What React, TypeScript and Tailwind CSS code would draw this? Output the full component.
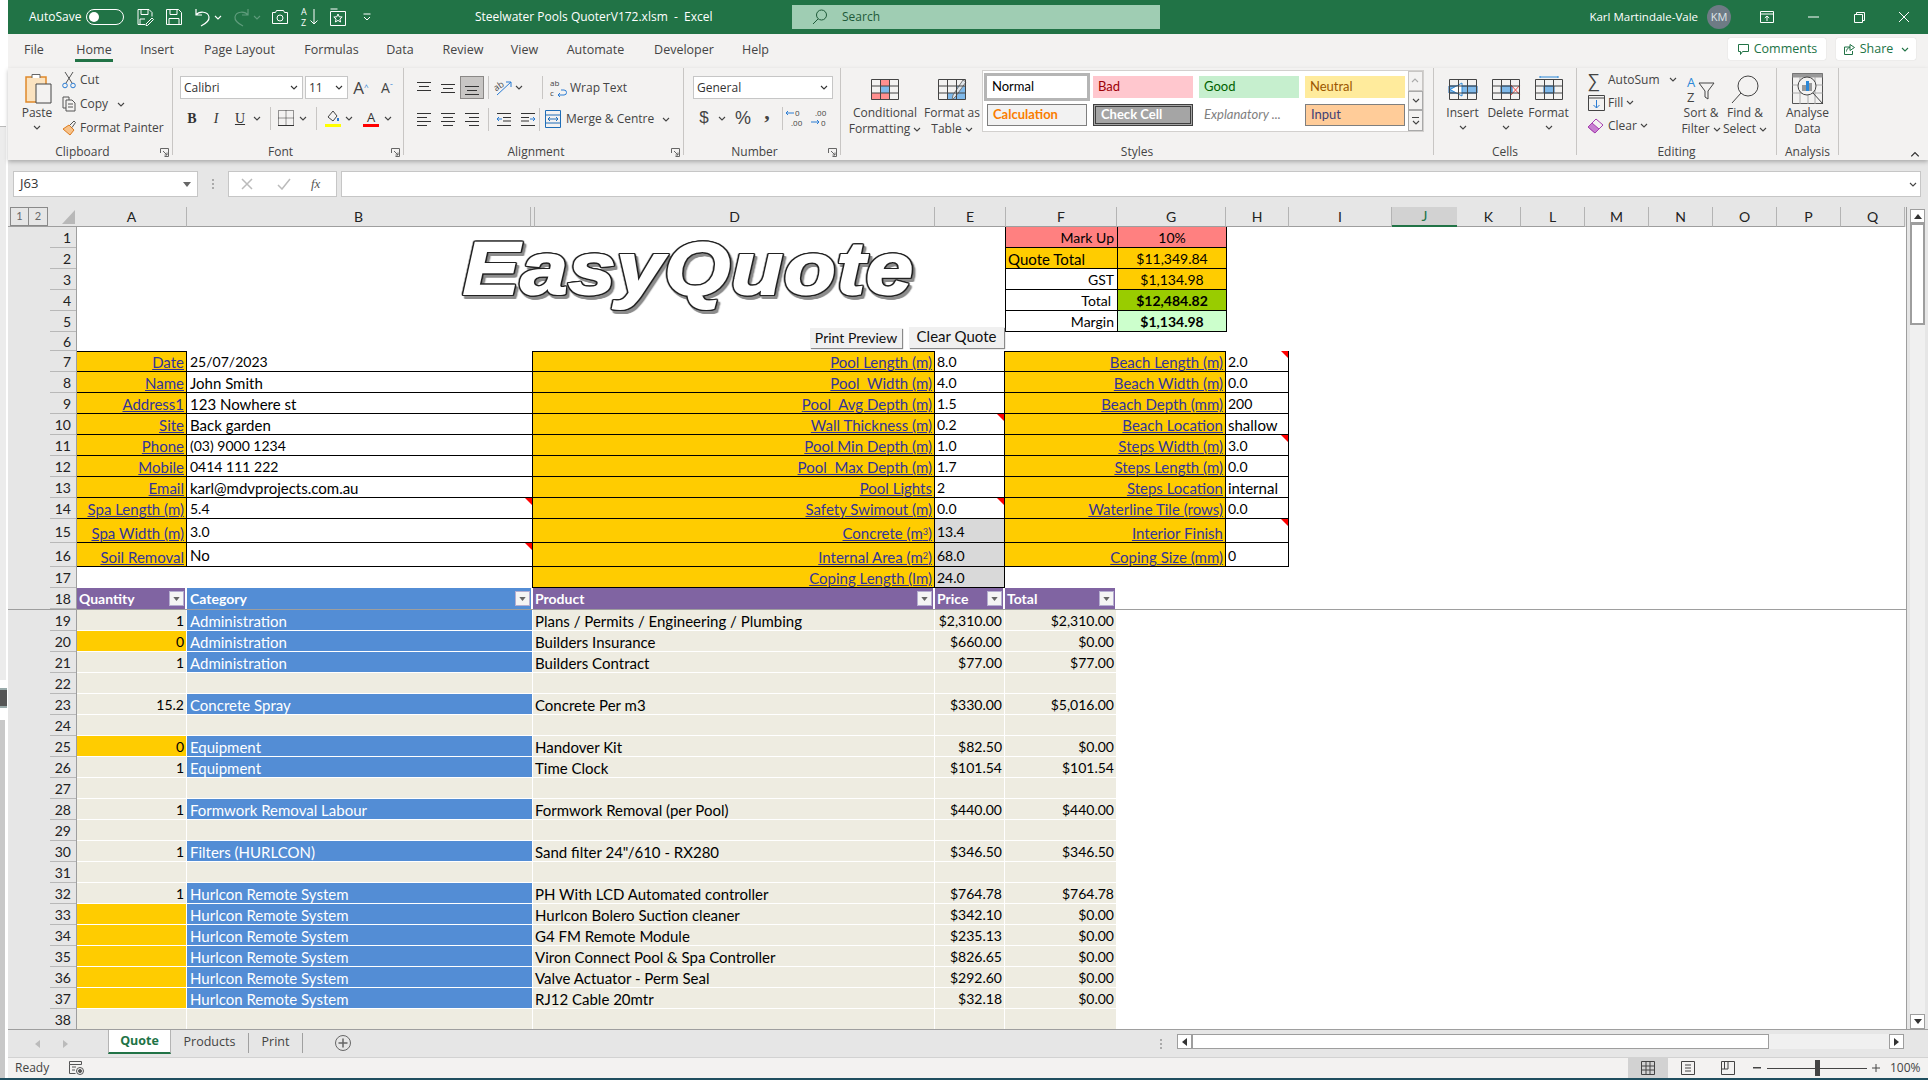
import React from 'react';

const UI = "[font-family:'Open_Sans',sans-serif]";
const CELLFONT = '[font-family:Lato,sans-serif]';

/* ---------- small icon helpers ---------- */
const Chev = ({ c = '#444' }: { c?: string }) => (
  <svg width="8" height="5" viewBox="0 0 8 5" fill="none" stroke={c} strokeWidth="1.1"><path d="M1 1l3 3 3-3" /></svg>
);
const Launcher = () => (
  <svg className="absolute right-[3px] bottom-[3px]" width="9" height="9" viewBox="0 0 9 9" fill="none" stroke="#666"><path d="M.5 5V.5H8.5V8.5H4.500M3 3l4 4M4.500 7H7V4.500" /></svg>
);
const Lines = ({ rows }: { rows: number[][] }) => (
  <svg width="16" height="16" viewBox="0 0 16 16" stroke="#333" strokeWidth="1">
    {rows.map(([x1, x2, y], i) => <path key={i} d={`M${x1} ${y + 0.5}H${x2}`} />)}
  </svg>
);
const Sep = () => <div className="w-px h-[23px] bg-[#c8c6c4] shrink-0" />;

const GridIcon = ({ children }: { children?: React.ReactNode }) => (
  <svg width="30" height="26" viewBox="0 0 30 26" fill="none">
    {children}
    <path d="M1.500 3.500h27v20h-27zM1.500 10h27M1.500 17h27M10.500 3.500v20M19.500 3.500v20" stroke="#444" />
  </svg>
);

/* ---------- ribbon pieces ---------- */
const Group = ({ w, label, launcher, children }: { w: string; label: string; launcher?: boolean; children: React.ReactNode }) => (
  <div className={`${w} shrink-0 h-[87px] border-r border-[#c8c6c4] flex flex-col relative`}>
    <div className="h-[76px] flex shrink-0">{children}</div>
    <div className={`h-[16px] leading-[16px] text-center text-[12px] text-[#444] relative ${launcher ? 'pr-[15px]' : ''}`}>
      {label}
      {launcher && <Launcher />}
    </div>
  </div>
);

const Large = ({ w, icon, lines, chev = true }: { w: string; icon: React.ReactNode; lines: string[]; chev?: boolean }) => (
  <div className={`${w} shrink-0 flex flex-col items-center pt-[4px] text-[12px] leading-[16px] text-[#444] whitespace-nowrap`}>
    <div className="h-[33px] flex items-center justify-center">{icon}</div>
    {lines.length === 1 ? (
      <>
        <div>{lines[0]}</div>
        {chev && <div className="mt-[4px]"><Chev /></div>}
      </>
    ) : (
      <>
        <div>{lines[0]}</div>
        <div className="flex items-center gap-[3px]">{lines[1]}{chev && <Chev />}</div>
      </>
    )}
  </div>
);

const StyleCell = ({ c, children }: { c: string; children: React.ReactNode }) => (
  <div className={`w-[100px] h-[22px] flex items-center pl-[5px] text-[13px] ${CELLFONT} ${c}`}>{children}</div>
);

const Select = ({ w, text }: { w: string; text: string }) => (
  <div className={`${w} h-[23px] bg-white border border-[#c6c6c6] flex items-center justify-between pl-[3px] pr-[4px] text-[12px] text-[#333] shrink-0`}>
    <span>{text}</span>
    <Chev c="#333" />
  </div>
);

function TitleBar() {
  return (
    <div className="h-[34px] bg-[#217346] flex items-center text-white shrink-0">
      <div className="w-[467px] shrink-0 flex items-center pl-[21px] text-[12px]">
        <span className="w-[50px]">AutoSave</span>
        <div className="ml-[7px] w-[38px] h-[16px] rounded-full border border-white flex items-center pl-[2px]">
          <div className="w-[10px] h-[10px] rounded-full bg-white" />
        </div>
        <svg className="ml-[12px]" width="18" height="18" viewBox="0 0 18 18" fill="none" stroke="#fff"><path d="M9 16.500H2V1.500h11l3 3v4M5 1.500v5h7v-5M4 16v-5h5M10 16l6-6 1.500 1.500-6 6H10z" /></svg>
        <svg className="ml-[11px]" width="18" height="18" viewBox="0 0 18 18" fill="none" stroke="#fff"><path d="M1.500 1.500h12l3 3v12h-15zM5 1.500v5h7v-5M4 16.500v-6h10v6" /></svg>
        <svg className="ml-[11px]" width="17" height="20" viewBox="0 0 17 20" fill="none" stroke="#fff" strokeWidth="1.2"><path d="M2 2v6h6M2 8c3-4 12-4 13 2 .5 4-4 7-8 9" /></svg>
        <div className="ml-[3px]"><Chev c="#fff" /></div>
        <svg className="ml-[11px]" width="17" height="20" viewBox="0 0 17 20" fill="none" stroke="#5f9c7c" strokeWidth="1.2"><path d="M15 2v6H9M15 8c-3-4-12-4-13 2-.5 4 4 7 8 9" /></svg>
        <div className="ml-[3px]"><Chev c="#5f9c7c" /></div>
        <svg className="ml-[11px]" width="16" height="16" viewBox="0 0 16 16" fill="none" stroke="#fff"><path d="M.5 3.500h3l1-2h7l1 2h3v11H.5z" /><circle cx="8" cy="9" r="3" /></svg>
        <svg className="ml-[13px] overflow-visible" width="18" height="20" viewBox="0 0 18 20" fill="none" stroke="#fff">
          <text x="0" y="8" fontSize="9" fill="#fff" stroke="none">A</text>
          <text x="0" y="19" fontSize="9" fill="#fff" stroke="none">Z</text>
          <path d="M13 2v15M9.500 13.500L13 17l3.500-3.500" />
        </svg>
        <svg className="ml-[11px]" width="16" height="18" viewBox="0 0 16 18" fill="none" stroke="#fff"><path d="M.5 3.500h15v14H.5zM.5 1h7" /><path d="M8 6l1.200 2.800 3 .2-2.300 2 .7 3L8 12.400 5.400 14l.7-3-2.300-2 3-.2z" /></svg>
        <svg className="ml-[17px]" width="8" height="8" viewBox="0 0 8 8" fill="none" stroke="#fff"><path d="M.5 1h7M1 4l3 3 3-3" /></svg>
      </div>
      <div className="w-[317px] shrink-0 text-[12px] whitespace-pre">Steelwater Pools QuoterV172.xlsm  -  Excel</div>
      <div className="w-[368px] h-[24px] bg-[#9fcdb3] flex items-center pl-[20px] text-[#1e5a39] text-[12px] shrink-0">
        <svg width="16" height="16" viewBox="0 0 16 16" fill="none" stroke="#1e5a39"><circle cx="9.500" cy="6" r="5" /><path d="M6 10l-5 5" /></svg>
        <span className="ml-[14px]">Search</span>
      </div>
      <div className="ml-auto flex items-center">
        <span className="text-[11.500px] whitespace-nowrap">Karl Martindale-Vale</span>
        <div className="ml-[9px] w-[24px] h-[24px] rounded-full bg-[#6e7b85] flex items-center justify-center text-[11px] text-[#dfe5e8]">KM</div>
        <div className="ml-[13px] w-[46px] flex justify-center">
          <svg width="14" height="12" viewBox="0 0 14 12" fill="none" stroke="#fff"><path d="M.5 .5h13v11H.5zM.5 3h13M7 10V5M4.800 7L7 5l2.200 2" /></svg>
        </div>
        <div className="w-[46px] flex justify-center"><svg width="11" height="2" viewBox="0 0 11 2" stroke="#fff"><path d="M0 1h11" /></svg></div>
        <div className="w-[46px] flex justify-center"><svg width="11" height="11" viewBox="0 0 11 11" fill="none" stroke="#fff"><path d="M.5 2.500h8v8h-8zM2.500 2.500v-2h8v8h-2" /></svg></div>
        <div className="w-[46px] pr-[2px] flex justify-center"><svg width="12" height="12" viewBox="0 0 12 12" fill="none" stroke="#fff"><path d="M1 1l10 10M11 1L1 11" /></svg></div>
      </div>
    </div>
  );
}

const tabs: [string, string][] = [
  ['File', 'w-[52px]'], ['Home', 'w-[68px]'], ['Insert', 'w-[58px]'], ['Page Layout', 'w-[107px]'], ['Formulas', 'w-[77px]'],
  ['Data', 'w-[60px]'], ['Review', 'w-[66px]'], ['View', 'w-[57px]'], ['Automate', 'w-[85px]'], ['Developer', 'w-[92px]'], ['Help', 'w-[51px]'],
];

function TabRow() {
  return (
    <div className="h-[34px] flex bg-[#f3f2f1] text-[12.500px] text-[#444] shrink-0">
      {tabs.map(([t, w]) => (
        <div key={t} className={`${w} flex flex-col items-center relative pt-[7px] leading-[18px] ${t === 'Home' ? 'font-medium' : ''}`}>
          {t}
          {t === 'Home' && <div className="absolute top-[25px] w-[38px] h-[3px] bg-[#217346]" />}
        </div>
      ))}
      <div className="ml-auto mr-[12px] mt-[4px] flex gap-[10px]">
        <div className="w-[98px] h-[22px] bg-white rounded-[2px] shadow-[0_0_1px_#bbb] flex items-center justify-center gap-[4px] text-[#217346] text-[12.500px]">
          <svg width="13" height="13" viewBox="0 0 13 13" fill="none" stroke="#217346"><path d="M1.500 1.500h10v7h-6l-2 3v-3h-2z" /></svg>
          Comments
        </div>
        <div className="w-[80px] h-[22px] bg-white rounded-[2px] shadow-[0_0_1px_#bbb] flex items-center justify-center gap-[4px] text-[#217346] text-[12.500px]">
          <svg width="13" height="13" viewBox="0 0 13 13" fill="none" stroke="#217346"><path d="M7 4H1.500v7.500h8V8M7 1.500l4.500 3-4.500 3zM7 4.500C4 5 3.500 7 3.500 8.500" /></svg>
          Share
          <div className="ml-[4px]"><Chev c="#217346" /></div>
        </div>
      </div>
    </div>
  );
}

function Ribbon() {
  const small = 'h-[24px] flex items-center text-[12px] text-[#444] whitespace-nowrap';
  return (
    <div className={`h-[92px] bg-[#f3f2f1] flex relative shrink-0 shadow-[0_2px_4px_rgba(0,0,0,0.25)]`}>
      {/* clipboard */}
      <Group w="w-[165px]" label="Clipboard" launcher>
        <div className="w-[54px] pl-[4px]">
          <Large
            w="w-full"
            lines={['Paste']}
            icon={
              <svg width="30" height="33" viewBox="0 0 30 33" fill="none">
                <path d="M4 5h20v25H4z" fill="#fbe3c0" stroke="#e0892a" strokeWidth="1.500" />
                <path d="M10 6V2.500h8V6" fill="#fff" stroke="#666" />
                <path d="M14 12h15v19H14z" fill="#f3f2f1" stroke="#444" />
              </svg>
            }
          />
        </div>
        <div>
          <div className={small}>
            <svg className="mr-[4px]" width="14" height="18" viewBox="0 0 14 18" fill="none" stroke="#555"><path d="M3 1l7 11M11 1L4 12" /><circle cx="3" cy="14.500" r="2.300" stroke="#2b7cd3" /><circle cx="11" cy="14.500" r="2.300" stroke="#2b7cd3" /></svg>
            Cut
          </div>
          <div className={small}>
            <svg className="mr-[4px]" width="14" height="16" viewBox="0 0 14 16" fill="none" stroke="#555"><path d="M1 1h6v3M1 1v11h3M4 4h6l3 3v8H4zM6 8h5M6 11h5" /></svg>
            Copy
            <div className="ml-[9px]"><Chev /></div>
          </div>
          <div className={small}>
            <svg className="mr-[4px]" width="14" height="16" viewBox="0 0 14 16" fill="none"><path d="M1 9l6-4 5 5-4 5z" fill="#f7c28a" stroke="#dc7b1e" /><path d="M8 5l4-4 1.500 1.500-3.500 5" stroke="#555" /></svg>
            Format Painter
          </div>
        </div>
      </Group>

      {/* font */}
      <Group w="w-[231px]" label="Font" launcher>
        <div className="flex flex-col pl-[7px]">
          <div className="mt-[8px] flex items-center h-[23px]">
            <Select w="w-[123px]" text="Calibri" />
            <div className="w-[2px]" />
            <Select w="w-[43px]" text="11" />
            <span className="w-[26px] text-center text-[17px] text-[#444]">A<sup className="text-[8px] text-[#2b7cd3]">^</sup></span>
            <span className="w-[26px] text-center text-[14px] text-[#444]">A<sup className="text-[8px] text-[#2b7cd3]">ˇ</sup></span>
          </div>
          <div className="mt-[7px] flex items-center h-[24px] text-[14px] text-[#333]">
            <span className="w-[24px] text-center font-bold [font-family:'Liberation_Serif',serif]">B</span>
            <span className="w-[24px] text-center italic [font-family:'Liberation_Serif',serif]">I</span>
            <span className="w-[24px] text-center underline [font-family:'Liberation_Serif',serif]">U</span>
            <span className="w-[10px] flex justify-center"><Chev /></span>
            <span className="w-[8px]" /><Sep />
            <span className="w-[7px]" />
            <svg width="16" height="16" viewBox="0 0 16 16" fill="none" stroke="#333" strokeDasharray="1 1"><path d="M.5 .5h15v15H.5zM8 .5v15M.5 8h15" /><path d="M0 15.500h16" strokeDasharray="none" /></svg>
            <span className="w-[4px]" />
            <span className="w-[10px] flex justify-center"><Chev /></span>
            <span className="w-[8px]" /><Sep />
            <span className="w-[8px]" />
            <svg width="16" height="18" viewBox="0 0 16 18" fill="none"><path d="M3 8l5-6 4 5-4 5z" stroke="#444" /><path d="M13 9v3" stroke="#2b7cd3" strokeWidth="2" /><path d="M0 15h16v3H0z" fill="#ffff00" /></svg>
            <span className="w-[3px]" />
            <span className="w-[10px] flex justify-center"><Chev /></span>
            <span className="w-[9px]" />
            <div className="w-[16px] flex flex-col items-center text-[13px] leading-[14px]">A<div className="w-[16px] h-[3px] bg-[#ff0000]" /></div>
            <span className="w-[4px]" />
            <span className="w-[10px] flex justify-center"><Chev /></span>
          </div>
        </div>
      </Group>

      {/* alignment */}
      <Group w="w-[280px]" label="Alignment" launcher>
        <div className="flex flex-col pl-[8px]">
          <div className="mt-[8px] flex items-center h-[23px]">
            <span className="w-[24px] flex justify-center"><Lines rows={[[1, 15, 2], [3, 13, 6], [1, 15, 10]]} /></span>
            <span className="w-[24px] flex justify-center"><Lines rows={[[1, 15, 4], [3, 13, 8], [1, 15, 12]]} /></span>
            <span className="w-[24px] h-[23px] bg-[#c8c6c4] border border-[#8a8886] flex justify-center items-center"><Lines rows={[[1, 15, 6], [3, 13, 10], [1, 15, 14]]} /></span>
            <span className="w-[4px]" /><Sep />
            <svg className="ml-[5px] overflow-visible" width="20" height="18" viewBox="0 0 20 18" fill="none"><text x="0" y="10" fontSize="9" fill="#444" transform="rotate(-35 5 8)">ab</text><path d="M3 16L17 3M12 3h5v5" stroke="#2b7cd3" /></svg>
            <span className="w-[10px] flex justify-center"><Chev /></span>
            <span className="w-[18px]" /><Sep />
            <svg className="ml-[7px] overflow-visible" width="18" height="20" viewBox="0 0 18 20" fill="none" stroke="#2b7cd3"><text x="0" y="8" fontSize="8" fill="#444" stroke="none">ab</text><text x="0" y="18" fontSize="8" fill="#444" stroke="none">c</text><path d="M11 12h3a2 2 0 0 1 0 5H8m2-2l-2 2 2 2" /></svg>
            <span className="ml-[2px] text-[12px] text-[#444]">Wrap Text</span>
          </div>
          <div className="mt-[8px] flex items-center h-[24px]">
            <span className="w-[24px] flex justify-center"><Lines rows={[[1, 15, 2], [1, 11, 6], [1, 15, 10], [1, 11, 14]]} /></span>
            <span className="w-[24px] flex justify-center"><Lines rows={[[1, 15, 2], [3, 13, 6], [1, 15, 10], [3, 13, 14]]} /></span>
            <span className="w-[24px] flex justify-center"><Lines rows={[[1, 15, 2], [5, 15, 6], [1, 15, 10], [5, 15, 14]]} /></span>
            <span className="w-[4px]" /><Sep />
            <svg className="ml-[7px]" width="16" height="16" viewBox="0 0 16 16" fill="none" stroke="#333"><path d="M1 2.500h14M7 6.500h8M7 10h8M1 14.500h14" /><path d="M6 8H1m2-2L1 8l2 2" stroke="#2b7cd3" /></svg>
            <svg className="ml-[8px]" width="16" height="16" viewBox="0 0 16 16" fill="none" stroke="#333"><path d="M1 2.500h14M1 6.500h8M1 10h8M1 14.500h14" /><path d="M10 8h5m-2-2l2 2-2 2" stroke="#2b7cd3" /></svg>
            <span className="w-[3px]" /><Sep />
            <svg className="ml-[5px]" width="16" height="18" viewBox="0 0 16 18" fill="none" stroke="#1e6db7"><path d="M.5 .5h15v17H.5zM.5 5h15M.5 13h15M3 9h10M5 7L3 9l2 2M11 7l2 2-2 2" /></svg>
            <span className="ml-[5px] text-[12px] text-[#444] whitespace-nowrap">Merge &amp; Centre</span>
            <div className="ml-[8px]"><Chev /></div>
          </div>
        </div>
      </Group>

      {/* number */}
      <Group w="w-[157px]" label="Number" launcher>
        <div className="flex flex-col pl-[9px]">
          <div className="mt-[8px]"><Select w="w-[140px]" text="General" /></div>
          <div className="mt-[7px] flex items-center h-[24px] text-[#444]">
            <span className="w-[22px] text-center text-[17px] [font-family:'Liberation_Sans',sans-serif]">$</span>
            <span className="w-[13px] flex justify-center"><Chev /></span>
            <span className="ml-[3px] w-[24px] text-center text-[18px] [font-family:'Liberation_Sans',sans-serif]">%</span>
            <span className="w-[24px] text-center text-[22px] font-bold leading-[20px] pb-[12px] [font-family:'Liberation_Serif',serif]">,</span>
            <span className="w-[3px]" /><Sep />
            <svg className="overflow-visible" width="24" height="18" viewBox="0 0 24 18" fill="none"><text x="12" y="7" fontSize="8" fill="#444">0</text><text x="8" y="17" fontSize="8" fill="#444">.00</text><path d="M11 4H3m2-2L3 4l2 2" stroke="#2b7cd3" /></svg>
            <svg className="overflow-visible" width="24" height="18" viewBox="0 0 24 18" fill="none"><text x="8" y="7" fontSize="8" fill="#444">.00</text><text x="14" y="17" fontSize="8" fill="#444">0</text><path d="M4 13h8m-2-2l2 2-2 2" stroke="#2b7cd3" /></svg>
          </div>
        </div>
      </Group>

      {/* styles */}
      <Group w="w-[593px]" label="Styles">
        <Large
          w="w-[88px]"
          lines={['Conditional', 'Formatting']}
          icon={
            <GridIcon>
              <path d="M10 3h10v7H10zM1 17h18v7H1z" fill="#ff8f8f" />
              <path d="M10 10h9v7h-9z" fill="#7fb9ea" />
            </GridIcon>
          }
        />
        <Large
          w="w-[46px]"
          lines={['Format as', 'Table']}
          icon={
            <GridIcon>
              <path d="M19 10h10v13H10V17h9z" fill="#7fb9ea" />
              <path d="M29 6L19 20l-4 4 1-5L26 4z" fill="#dfe5ea" stroke="#777" />
            </GridIcon>
          }
        />
        <div className="ml-[7px] mt-[2px] w-[442px] h-[62px] bg-white border border-[#d2d0ce] flex">
          <div className="pl-[4px] pt-[5px] flex flex-col gap-[6px]">
            <div className="flex gap-[6px]">
              <StyleCell c="bg-white ring-[3px] ring-[#b5b5b5] text-black">Normal</StyleCell>
              <StyleCell c="bg-[#ffc7ce] text-[#9c0006]">Bad</StyleCell>
              <StyleCell c="bg-[#c6efce] text-[#006100]">Good</StyleCell>
              <StyleCell c="bg-[#ffeb9c] text-[#9c5700]">Neutral</StyleCell>
            </div>
            <div className="flex gap-[6px]">
              <StyleCell c="bg-[#f2f2f2] border border-[#7f7f7f] text-[#fa7d00] font-bold">Calculation</StyleCell>
              <StyleCell c="bg-[#a5a5a5] border-[3px] border-double border-[#3f3f3f] text-white font-bold">Check Cell</StyleCell>
              <StyleCell c="italic text-[#7f7f7f]">Explanatory ...</StyleCell>
              <StyleCell c="bg-[#ffcc99] border border-[#7f7f7f] text-[#3f3f76]">Input</StyleCell>
            </div>
          </div>
          <div className="ml-auto w-[15px] flex flex-col text-[#666]">
            <div className="h-[20px] border border-[#c8c6c4] bg-[#f3f2f1] flex items-center justify-center rotate-180"><Chev c="#aaa" /></div>
            <div className="h-[19px] border border-[#a9a9a9] bg-[#f3f2f1] flex items-center justify-center"><Chev /></div>
            <div className="h-[21px] border border-[#a9a9a9] bg-[#f3f2f1] flex flex-col gap-[2px] items-center justify-center"><div className="w-[7px] h-px bg-[#444]" /><Chev /></div>
          </div>
        </div>
      </Group>

      {/* cells */}
      <Group w="w-[143px]" label="Cells">
        <div className="w-[7px]" />
        <Large w="w-[43px]" lines={['Insert']} icon={<GridIcon><path d="M1 10h28v7H1z" fill="#7fb9ea" stroke="#1e6db7" /><path d="M14 7L2 13.500 14 20v-3h0v-7z" fill="#fff" stroke="#2b88d8" /></GridIcon>} />
        <Large w="w-[43px]" lines={['Delete']} icon={<GridIcon><path d="M10 10h11v7H10z" fill="#7fb9ea" stroke="#1e6db7" /><path d="M20 9l9 10M29 9l-9 10" stroke="#f04a4a" /></GridIcon>} />
        <Large w="w-[43px]" lines={['Format']} icon={<GridIcon><path d="M10 10h10v7H10z" fill="#7fb9ea" stroke="#1e6db7" /><path d="M6 1h18M6 0v2M24 0v2" stroke="#2b88d8" /></GridIcon>} />
      </Group>

      {/* editing */}
      <Group w="w-[200px]" label="Editing">
        <div className="w-[9px]" />
        <div className="w-[93px]">
          <div className="h-[23px] flex items-center text-[12px] text-[#444]">
            <span className="w-[13px] ml-[2px] mr-[7px] text-[18px] leading-[18px]">∑</span>AutoSum<div className="ml-[9px]"><Chev /></div>
          </div>
          <div className="h-[23px] flex items-center text-[12px] text-[#444]">
            <svg className="ml-[2px] mr-[3px]" width="17" height="16" viewBox="0 0 17 16" fill="none"><path d="M.5 .5h16v15H.5zM.5 3h16" stroke="#444" /><path d="M8.500 5v8m-3-3l3 3 3-3" stroke="#2b7cd3" /></svg>
            Fill<div className="ml-[3px]"><Chev /></div>
          </div>
          <div className="h-[23px] flex items-center text-[12px] text-[#444]">
            <svg className="ml-[1px] mr-[3px]" width="18" height="16" viewBox="0 0 18 16" fill="none"><path d="M1 9l8-8 7 6-8 8z" fill="#f3f2f1" stroke="#a63fb0" /><path d="M1 9l4-4 7 6-4 4z" fill="#c77fd0" stroke="#a63fb0" /></svg>
            Clear<div className="ml-[3px]"><Chev /></div>
          </div>
        </div>
        <Large
          w="w-[44px]"
          lines={['Sort &', 'Filter']}
          icon={
            <svg width="30" height="30" viewBox="0 0 30 30" fill="none">
              <text x="1" y="13" fontSize="13" fill="#2b88d8">A</text>
              <text x="1" y="28" fontSize="13" fill="#444">Z</text>
              <path d="M13 9h15l-6 8v8l-3-2v-6z" stroke="#444" />
            </svg>
          }
        />
        <Large
          w="w-[44px]"
          lines={['Find &', 'Select']}
          icon={
            <svg width="30" height="30" viewBox="0 0 30 30" fill="none" stroke="#444"><circle cx="18" cy="12" r="10" /><path d="M11 19L2 29" /></svg>
          }
        />
      </Group>

      {/* analysis */}
      <Group w="w-[62px]" label="Analysis">
        <Large
          w="w-full"
          chev={false}
          lines={['Analyse', 'Data']}
          icon={
            <svg width="32" height="32" viewBox="0 0 32 32" fill="none">
              <path d="M.5 .5h30v30H.5z" stroke="#555" />
              <path d="M.5 .5h30v4H.5z" fill="#999" />
              <path d="M.5 12h30M.5 20h30M8 4v27M16 4v27M23 4v27" stroke="#aaa" />
              <circle cx="15" cy="13" r="9" fill="#f3f2f1" stroke="#444" />
              <path d="M10 12h4v6h-4z" fill="#999" /><path d="M14 8h3v10h-3z" fill="#2b88d8" /><path d="M17 10h3v8h-3z" fill="#999" />
              <path d="M21 20l10 11" stroke="#444" />
            </svg>
          }
        />
      </Group>
      <div className="flex-1 flex items-end justify-end pr-[9px] pb-[3px]">
        <div className="rotate-180 scale-125"><Chev c="#333" /></div>
      </div>
    </div>
  );
}

function FormulaBar() {
  return (
    <div className="h-[47px] bg-[#e6e6e6] flex pt-[11px] shrink-0">
      <div className="ml-[5px] w-[185px] h-[26px] bg-white border border-[#c6c6c6] flex items-center justify-between pl-[6px] pr-[6px] text-[13px] text-[#333]">
        J63
        <svg width="8" height="5" viewBox="0 0 8 5" fill="#666"><path d="M0 0h8L4 5z" /></svg>
      </div>
      <div className="w-[30px] h-[26px] flex flex-col items-center justify-center gap-[2px]">
        <div className="w-[2px] h-[2px] bg-[#aaa]" /><div className="w-[2px] h-[2px] bg-[#aaa]" /><div className="w-[2px] h-[2px] bg-[#aaa]" />
      </div>
      <div className="w-[109px] h-[26px] bg-white border border-[#c6c6c6] flex items-center">
        <svg className="ml-[12px]" width="12" height="12" viewBox="0 0 12 12" fill="none" stroke="#bbb" strokeWidth="1.500"><path d="M1 1l10 10M11 1L1 11" /></svg>
        <svg className="ml-[24px]" width="14" height="12" viewBox="0 0 14 12" fill="none" stroke="#bbb" strokeWidth="1.500"><path d="M1 7l4 4 8-10" /></svg>
        <span className="ml-[20px] text-[13px] italic text-[#555] [font-family:'Liberation_Serif',serif]">fx</span>
      </div>
      <div className="ml-[4px] w-[1580px] h-[26px] bg-white border border-[#c6c6c6] flex items-center justify-end pr-[3px]">
        <Chev />
      </div>
    </div>
  );
}

const columns: [string, string][] = [
  ['A', 'w-[110px]'], ['B', 'w-[344px]'], ['', 'w-[4px]'], ['D', 'w-[400px]'], ['E', 'w-[71px]'], ['F', 'w-[111px]'], ['G', 'w-[109px]'],
  ['H', 'w-[63px]'], ['I', 'w-[103px]'], ['J', 'w-[65px]'], ['K', 'w-[64px]'], ['L', 'w-[64px]'], ['M', 'w-[64px]'], ['N', 'w-[64px]'],
  ['O', 'w-[64px]'], ['P', 'w-[64px]'], ['Q', 'w-[64px]'],
];

function ColumnHeader() {
  return (
    <div className={`h-[20px] flex bg-[#e6e6e6] text-[14px] text-[#222] ${CELLFONT} shrink-0`}>
      <div className="w-[69px] shrink-0 flex relative border-b border-[#9e9e9e]">
        <div className="ml-[2px] flex h-[19px] border border-[#8a8a8a] text-[11px] text-[#666]">
          <span className="w-[18px] text-center border-r border-[#8a8a8a]">1</span>
          <span className="w-[18px] text-center">2</span>
        </div>
        <div className="absolute left-[54px] top-[3px] w-[13px] h-[14px] bg-[#b8b8b8] [clip-path:polygon(100%_0,100%_100%,0_100%)]" />
      </div>
      {columns.map(([c, w]) => (
        <div
          key={c + w}
          className={`${w} shrink-0 flex items-center justify-center leading-none ${
            c === 'J' ? 'bg-[#d2d2d2] text-[#217346] border-b-2 border-[#217346]' : 'border-r border-b border-r-[#b4b4b4] border-b-[#9e9e9e]'
          }`}
        >
          {c}
        </div>
      ))}
    </div>
  );
}

/* ---------- sheet ---------- */
const RowHdr = ({ n }: { n: number }) => (
  <div className="w-[69px] h-full shrink-0 flex justify-end bg-[#e6e6e6] border-r border-[#9e9e9e]">
    <div className="w-[26px] h-full border-b border-[#b8b8b8] flex items-center justify-end pr-[5px] pt-[2px] text-[14px] text-[#222]">{n}</div>
  </div>
);

const Flag = () => <div className="absolute right-0 top-0 w-[7px] h-[7px] bg-[#ff0000] [clip-path:polygon(0_0,100%_0,100%_100%)]" />;

const GRID = 'grid grid-cols-[110px_346px_402px_70px_112px_109px_63px] h-full';

// Lato's digits run wider than Calibri's, its letters narrower
const numeric = (s: React.ReactNode) => (typeof s === 'string' && /^[\d$.,()/ %]*$/.test(s) ? 'text-[14px]' : 'text-[15px]');

const Label = ({ children, c = '', span = '', low = false }: { children: React.ReactNode; c?: string; span?: string; low?: boolean }) => (
  <div className={`${span} ${c} bg-[#ffcc00] border-r border-b border-black flex justify-end ${low ? 'items-end pb-[1px]' : 'items-center pt-[2px]'} pr-[2px] text-[#333399] whitespace-pre overflow-hidden`}>
    <span className="underline">{children}</span>
  </div>
);
const Value = ({ children, c = 'bg-white', flag = false, pad = 'pl-[2px]' }: { children?: React.ReactNode; c?: string; flag?: boolean; pad?: string }) => (
  <div className={`relative ${c} ${pad} ${numeric(children)} border-r border-b border-black flex items-center pt-[2px] text-black whitespace-nowrap`}>
    {children}
    {flag && <Flag />}
  </div>
);

type Form = {
  n: number; h?: string; low?: boolean;
  a: string; b: string; bf?: boolean;
  d: React.ReactNode; e: string; ef?: boolean; eg?: boolean;
  f: string; v: string; vf?: boolean;
};

const M3 = <>Concrete (m<sup className="text-[9px]">3</sup>)</>;
const M2 = <>Internal Area (m<sup className="text-[9px]">2</sup>)</>;

const form: Form[] = [
  { n: 7, a: 'Date', b: '25/07/2023', d: 'Pool Length (m)', e: '8.0', f: 'Beach Length (m)', v: '2.0', vf: true },
  { n: 8, a: 'Name', b: 'John Smith', d: 'Pool  Width (m)', e: '4.0', f: 'Beach Width (m)', v: '0.0' },
  { n: 9, a: 'Address1', b: '123 Nowhere st', d: 'Pool  Avg Depth (m)', e: '1.5', f: 'Beach Depth (mm)', v: '200' },
  { n: 10, a: 'Site', b: 'Back garden', d: 'Wall Thickness (m)', e: '0.2', ef: true, f: 'Beach Location', v: 'shallow' },
  { n: 11, a: 'Phone', b: '(03) 9000 1234', d: 'Pool Min Depth (m)', e: '1.0', f: 'Steps Width (m)', v: '3.0', vf: true },
  { n: 12, a: 'Mobile', b: '0414 111 222', d: 'Pool  Max Depth (m)', e: '1.7', f: 'Steps Length (m)', v: '0.0' },
  { n: 13, a: 'Email', b: 'karl@mdvprojects.com.au', d: 'Pool Lights', e: '2', f: 'Steps Location', v: 'internal' },
  { n: 14, a: 'Spa Length (m)', b: '5.4', bf: true, d: 'Safety Swimout (m)', e: '0.0', ef: true, f: 'Waterline Tile (rows)', v: '0.0' },
  { n: 15, h: 'h-[24px]', low: true, a: 'Spa Width (m)', b: '3.0', d: M3, e: '13.4', eg: true, f: 'Interior Finish', v: '', vf: true },
  { n: 16, h: 'h-[24px]', low: true, a: 'Soil Removal', b: 'No', bf: true, d: M2, e: '68.0', eg: true, f: 'Coping Size (mm)', v: '0' },
];

const FilterBtn = () => (
  <div className="ml-auto w-[15px] h-[15px] bg-[#f4f4f4] border border-[#b5aed0] flex items-center justify-center shrink-0">
    <svg width="7" height="4" viewBox="0 0 8 5" fill="#666"><path d="M0 0h8L4 5z" /></svg>
  </div>
);
const Th = ({ c, text, pad = 'pl-[2px]' }: { c: string; text: string; pad?: string }) => (
  <div className={`${c} ${pad} border-r-2 border-white flex items-center pr-px text-[14px] text-white font-bold`}>
    {text}
    <FilterBtn />
  </div>
);

type Item = [string, boolean, string, string, string, string];
const rem = 'Hurlcon Remote System';
const items: (Item | null)[] = [
  ['1', false, 'Administration', 'Plans / Permits / Engineering / Plumbing', '$2,310.00', '$2,310.00'],
  ['0', true, 'Administration', 'Builders Insurance', '$660.00', '$0.00'],
  ['1', false, 'Administration', 'Builders Contract', '$77.00', '$77.00'],
  null,
  ['15.2', false, 'Concrete Spray', 'Concrete Per m3', '$330.00', '$5,016.00'],
  null,
  ['0', true, 'Equipment', 'Handover Kit', '$82.50', '$0.00'],
  ['1', false, 'Equipment', 'Time Clock', '$101.54', '$101.54'],
  null,
  ['1', false, 'Formwork Removal Labour', 'Formwork Removal (per Pool)', '$440.00', '$440.00'],
  null,
  ['1', false, 'Filters (HURLCON)', 'Sand filter 24"/610 - RX280', '$346.50', '$346.50'],
  null,
  ['1', false, rem, 'PH With LCD Automated controller', '$764.78', '$764.78'],
  ['', true, rem, 'Hurlcon Bolero Suction cleaner', '$342.10', '$0.00'],
  ['', true, rem, 'G4 FM Remote Module', '$235.13', '$0.00'],
  ['', true, rem, 'Viron Connect Pool & Spa Controller', '$826.65', '$0.00'],
  ['', true, rem, 'Valve Actuator - Perm Seal', '$292.60', '$0.00'],
  ['', true, rem, 'RJ12 Cable 20mtr', '$32.18', '$0.00'],
  null,
];

function Sheet() {
  const td = 'border-r border-b border-white flex items-center pt-[2px] text-black';
  const box = 'border-r border-b border-black flex items-center pt-[2px]';
  return (
    <div className={`flex-1 min-h-0 overflow-hidden bg-white text-[15px] leading-none ${CELLFONT}`}>
      {/* rows 1-6: logo area and totals */}
      <div className="flex h-[124px]">
        <div className="flex flex-col">
          {[1, 2, 3, 4, 5].map((n) => <div key={n} className="h-[21px]"><RowHdr n={n} /></div>)}
          <div className="h-[19px]"><RowHdr n={6} /></div>
        </div>
        <div className="w-[928px] relative">
          <div className="absolute left-[386px] top-[5px] origin-left scale-x-[1.14] text-[74px] leading-none tracking-[1px] font-bold italic text-white whitespace-nowrap [font-family:'Liberation_Sans',sans-serif] [-webkit-text-stroke:2px_#fff] [filter:drop-shadow(1px_0_0_#222)_drop-shadow(-1px_0_0_#222)_drop-shadow(0_1px_0_#222)_drop-shadow(0_-1px_0_#222)_drop-shadow(2px_3px_0_#8c8c8c)]">
            EasyQuote
          </div>
          <div className="absolute right-[1px] bottom-[3px] flex items-end gap-[7px] text-[#111]">
            <div className="w-[92px] h-[20px] bg-[#f0f0f0] shadow-[1px_1px_1px_#8a8a8a] flex items-center justify-center text-[14px]">Print Preview</div>
            <div className="w-[95px] h-[21px] bg-[#f0f0f0] shadow-[1px_1px_1px_#8a8a8a] flex items-center justify-center pb-[2px]">Clear Quote</div>
          </div>
        </div>
        <div className="w-[221px] h-[105px] grid grid-cols-[112px_109px] grid-rows-[repeat(5,21px)] border-l border-black text-[14px] text-black">
          <div className={`bg-[#ff8080] ${box} justify-end pr-[3px]`}>Mark Up</div>
          <div className={`bg-[#ff8080] ${box} justify-center`}>10%</div>
          <div className={`bg-[#ffcc00] ${box} pl-[2px] text-[15px]`}>Quote Total</div>
          <div className={`bg-[#ffcc00] ${box} justify-center`}>$11,349.84</div>
          <div className={`${box} justify-end pr-[3px]`}>GST</div>
          <div className={`bg-[#ffcc00] ${box} justify-center`}>$1,134.98</div>
          <div className={`${box} justify-end pr-[6px]`}>Total</div>
          <div className={`bg-[#99cc00] ${box} justify-center font-bold`}>$12,484.82</div>
          <div className={`${box} justify-end pr-[3px]`}>Margin</div>
          <div className={`bg-[#ccffcc] ${box} justify-center font-bold`}>$1,134.98</div>
        </div>
      </div>

      {/* rows 7-16: quote form */}
      <div className="border-t border-black ml-[69px] w-[1212px] h-0 relative" />
      {form.map((r) => (
        <div key={r.n} className={`flex ${r.h ?? 'h-[21px]'} ${r.n === 7 ? '-mt-px' : ''}`}>
          <RowHdr n={r.n} />
          <div className={GRID}>
            <Label low={r.low}>{r.a}</Label>
            <Value flag={r.bf} pad="pl-[3px]">{r.b}</Value>
            <Label low={r.low}>{r.d}</Label>
            <Value flag={r.ef} c={r.eg ? 'bg-[#d9d9d9]' : 'bg-white'}>{r.e}</Value>
            <Label low={r.low} span="col-span-2">{r.f}</Label>
            <Value flag={r.vf}>{r.v}</Value>
          </div>
        </div>
      ))}

      {/* row 17 */}
      <div className="flex h-[21px]">
        <RowHdr n={17} />
        <div className={GRID}>
          <div className="col-span-2 border-r border-black" />
          <Label>Coping Length (lm)</Label>
          <Value c="bg-[#d9d9d9]">24.0</Value>
        </div>
      </div>

      {/* row 18: table header */}
      <div className="flex h-[21px]">
        <RowHdr n={18} />
        <div className={GRID}>
          <Th c="bg-[#8064a2]" text="Quantity" />
          <Th c="bg-[#538dd5]" text="Category" pad="pl-[3px]" />
          <Th c="bg-[#8064a2]" text="Product" />
          <Th c="bg-[#8064a2]" text="Price" />
          <Th c="bg-[#8064a2]" text="Total" />
        </div>
      </div>
      <div className="h-px bg-[#9e9e9e]" />

      {/* rows 19-38: table body */}
      {items.map((it, i) => (
        <div key={i} className="flex h-[21px]">
          <RowHdr n={19 + i} />
          <div className={GRID}>
            <div className={`${td} justify-end pr-[2px] text-[14px] ${it && it[1] ? 'bg-[#ffcc00]' : 'bg-[#eeece1]'}`}>{it ? it[0] : ''}</div>
            <div className={`${td} pl-[3px] ${it ? 'bg-[#538dd5] text-white' : 'bg-[#eeece1]'}`}>{it ? it[2] : ''}</div>
            <div className={`${td} pl-[2px] bg-[#eeece1]`}>{it ? it[3] : ''}</div>
            <div className={`${td} justify-end pr-[2px] text-[14px] bg-[#eeece1]`}>{it ? it[4] : ''}</div>
            <div className={`${td} justify-end pr-[2px] text-[14px] bg-[#eeece1]`}>{it ? it[5] : ''}</div>
          </div>
        </div>
      ))}
    </div>
  );
}

function VScroll() {
  return (
    <div className="w-[21px] h-full bg-[#e6e6e6] flex flex-col pl-[3px] pr-[3px] pt-[2px] shrink-0">
      <div className="h-[14px] bg-white border border-[#9e9e9e] flex items-center justify-center">
        <svg width="8" height="5" viewBox="0 0 8 5" fill="#333"><path d="M0 5h8L4 0z" /></svg>
      </div>
      <div className="h-[102px] bg-white border-2 border-[#9e9e9e]" />
      <div className="flex-1 bg-[#f0f0f0]" />
      <div className="h-[15px] bg-white border border-[#9e9e9e] flex items-center justify-center">
        <svg width="8" height="5" viewBox="0 0 8 5" fill="#333"><path d="M0 0h8L4 5z" /></svg>
      </div>
    </div>
  );
}

function SheetTabs() {
  return (
    <div className={`h-[28px] bg-[#e6e6e6] border-t border-[#9e9e9e] flex text-[12.500px] text-[#444] shrink-0 ${UI}`}>
      <div className="w-[100px] flex items-center">
        <svg className="ml-[27px]" width="5" height="8" viewBox="0 0 5 8" fill="#bbb"><path d="M5 0v8L0 4z" /></svg>
        <svg className="ml-[23px]" width="5" height="8" viewBox="0 0 5 8" fill="#bbb"><path d="M0 0v8l5-4z" /></svg>
      </div>
      <div className="w-[63px] h-[24px] bg-white border-b-2 border-l border-r border-l-[#b4b4b4] border-r-[#b4b4b4] border-b-[#217346] flex items-center justify-center font-bold text-[#217346]">Quote</div>
      <div className="w-[77px] h-[24px] flex items-center justify-center">Products</div>
      <div className="w-px h-[20px] mt-[3px] bg-[#a0a0a0]" />
      <div className="w-[53px] h-[24px] flex items-center justify-center">Print</div>
      <div className="w-px h-[20px] mt-[3px] bg-[#a0a0a0]" />
      <svg className="ml-[32px] mt-[5px]" width="16" height="16" viewBox="0 0 16 16" fill="none" stroke="#666"><circle cx="8" cy="8" r="7.500" /><path d="M8 3.500v9M3.500 8h9" strokeWidth="1.500" /></svg>
      <div className="ml-auto flex items-center">
        <div className="flex flex-col gap-[2px] mr-[15px]"><div className="w-[2px] h-[2px] bg-[#aaa]" /><div className="w-[2px] h-[2px] bg-[#aaa]" /><div className="w-[2px] h-[2px] bg-[#aaa]" /></div>
        <div className="w-[727px] h-[15px] flex bg-[#f0f0f0] mt-[-4px]">
          <div className="w-[15px] bg-white border border-[#9e9e9e] flex items-center justify-center">
            <svg width="5" height="8" viewBox="0 0 5 8" fill="#333"><path d="M5 0v8L0 4z" /></svg>
          </div>
          <div className="w-[577px] bg-white border border-[#9e9e9e]" />
          <div className="ml-auto w-[15px] bg-white border border-[#9e9e9e] flex items-center justify-center">
            <svg width="5" height="8" viewBox="0 0 5 8" fill="#333"><path d="M0 0v8l5-4z" /></svg>
          </div>
        </div>
        <div className="w-[24px]" />
      </div>
    </div>
  );
}

function StatusBar() {
  return (
    <div className="h-[21px] bg-[#f3f2f1] border-t border-[#d2d2d2] flex items-center text-[12px] text-[#444] shrink-0">
      <span className="ml-[7px]">Ready</span>
      <svg className="ml-[20px]" width="15" height="14" viewBox="0 0 15 14" fill="none" stroke="#555"><path d="M.5 .5h12v3H.5zM.5 3.500v9h6M3 6h4M3 9h3" /><circle cx="11" cy="10" r="3.500" /><circle cx="11" cy="10" r="1.500" fill="#555" /></svg>
      <div className="ml-auto flex items-center h-full">
        <div className="w-[40px] h-full bg-[#d2d2d2] flex items-center justify-center">
          <svg width="14" height="14" viewBox="0 0 14 14" fill="none" stroke="#444"><path d="M.5 .5h13v13H.5zM.5 5h13M.5 9h13M5 .5v13M9 .5v13" /></svg>
        </div>
        <div className="w-[40px] flex justify-center">
          <svg width="14" height="14" viewBox="0 0 14 14" fill="none" stroke="#444"><path d="M.5 .5h13v13H.5zM4 4h6M4 7h6M4 10h6" /></svg>
        </div>
        <div className="w-[40px] flex justify-center">
          <svg width="14" height="14" viewBox="0 0 14 14" fill="none" stroke="#444"><path d="M.5 .5h13v13H.5zM.5 8h6.500V.5" /><path d="M3.500 .5V8" /></svg>
        </div>
        <svg className="ml-[5px]" width="8" height="2" viewBox="0 0 8 2" fill="#444"><path d="M0 0h8v1.500H0z" /></svg>
        <div className="ml-[6px] w-[100px] h-px bg-[#444] relative">
          <div className="absolute left-[48px] top-[-8px] w-[5px] h-[16px] bg-[#444]" />
        </div>
        <svg className="ml-[5px]" width="8" height="8" viewBox="0 0 8 8" stroke="#444"><path d="M0 4h8M4 0v8" /></svg>
        <span className="ml-[10px] mr-[8px] w-[30px] text-[12px]">100%</span>
      </div>
    </div>
  );
}

export default function App() {
  return (
    <div className={`w-[1928px] h-[1080px] overflow-hidden flex flex-col bg-white ${UI}`}>
      <div className="h-[1078px] flex">
        {/* sliver of the window behind */}
        <div className="w-[8px] shrink-0 flex flex-col bg-white">
          <div className="h-[126px]" />
          <div className="h-[554px] w-[6px] bg-[#ececec] border-t border-[#bbb]" />
          <div className="h-[8px]" />
          <div className="h-[20px] w-[7px] bg-[#555] border-y-2 border-[#9aa]" />
          <div className="h-[12px]" />
          <div className="flex-1 w-[5px] bg-[#c8c8c8]" />
        </div>
        <div className="w-[1920px] flex flex-col">
          <TitleBar />
          <TabRow />
          <Ribbon />
          <FormulaBar />
          <div className="h-[822px] flex shrink-0">
            <div className="w-[1899px] h-full flex flex-col shrink-0 border-r border-[#9e9e9e]">
              <ColumnHeader />
              <Sheet />
            </div>
            <VScroll />
          </div>
          <SheetTabs />
          <StatusBar />
        </div>
      </div>
      <div className="h-[2px] bg-[#1f4e5f] shrink-0" />
    </div>
  );
}
